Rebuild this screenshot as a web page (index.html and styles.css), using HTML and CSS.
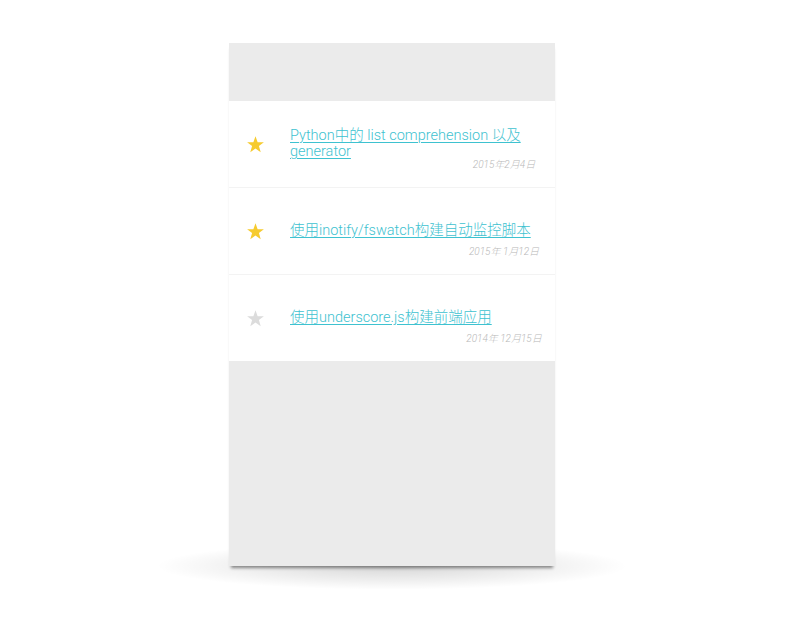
FILE: index.html
```html
<!DOCTYPE html>
<html lang="zh-CN">
<head>
<meta charset="utf-8">
<title>Posts</title>
<link rel="stylesheet" href="styles.css">
</head>
<body>
<div class="card">
  <div class="card-head"></div>
  <ul class="posts">
    <li class="post">
      <span class="star on"><svg viewBox="0 0 24 24" width="19" height="19"><polygon points="12,1.5 14.7,9 22.6,9.2 16.3,14 18.6,21.8 12,17.2 5.4,21.8 7.7,14 1.4,9.2 9.3,9"/></svg></span>
      <div class="post-body">
        <a class="title" href="#">Python中的 list comprehension 以及 generator</a>
        <div class="meta"><span class="date">2015年2月4日</span></div>
      </div>
    </li>
    <li class="post">
      <span class="star on"><svg viewBox="0 0 24 24" width="19" height="19"><polygon points="12,1.5 14.7,9 22.6,9.2 16.3,14 18.6,21.8 12,17.2 5.4,21.8 7.7,14 1.4,9.2 9.3,9"/></svg></span>
      <div class="post-body">
        <a class="title" href="#">使用inotify/fswatch构建自动监控脚本</a>
        <div class="meta"><span class="date">2015年 1月12日</span></div>
      </div>
    </li>
    <li class="post">
      <span class="star"><svg viewBox="0 0 24 24" width="19" height="19"><polygon points="12,1.5 14.7,9 22.6,9.2 16.3,14 18.6,21.8 12,17.2 5.4,21.8 7.7,14 1.4,9.2 9.3,9"/></svg></span>
      <div class="post-body">
        <a class="title" href="#">使用underscore.js构建前端应用</a>
        <div class="meta"><span class="date">2014年 12月15日</span></div>
      </div>
    </li>
  </ul>
  <div class="card-fill"></div>
</div>
</body>
</html>
```
FILE: styles.css
```css
html {
  height: 100%;
  background: #ffffff;
  overflow: hidden;
}
body {
  margin: 0;
  padding: 43px 0 0 0;
  min-height: 100%;
  box-sizing: border-box;
  font-family: Roboto, "Noto Sans CJK SC", sans-serif;
  font-weight: 300;
}
.card {
  position: relative;
  width: 326px;
  height: 523px;
  margin: 0 0 0 229px;
  background: #ebebeb;
  display: flex;
  flex-direction: column;
  box-shadow: 0 4px 3px -2px rgba(0,0,0,0.45);
}
.card::before {
  content: "";
  position: absolute;
  left: -75px;
  right: -75px;
  bottom: -24px;
  height: 48px;
  background: radial-gradient(ellipse at center, rgba(0,0,0,0.16) 0%, rgba(0,0,0,0.06) 45%, rgba(0,0,0,0) 70%);
  z-index: -1;
}
.card-head {
  height: 58px;
  flex: none;
}
.posts {
  list-style: none;
  margin: 0;
  padding: 0;
  background: #ffffff;
}
.post {
  display: grid;
  grid-template-columns: 61px 1fr;
  height: 86px;
  border-bottom: 1px solid #f3f3f3;
}
.post:last-child {
  border-bottom: none;
}
.star {
  align-self: center;
  justify-self: end;
  margin-right: 25px;
  display: flex;
  fill: #dcdcdc;
}
.star.on {
  fill: #f6cb2f;
}
.post-body {
  display: grid;
  grid-template-columns: 1fr;
  grid-template-rows: 1fr;
}
.title {
  grid-area: 1 / 1;
  align-self: center;
  justify-self: start;
  margin: 0;
  font-size: 14.5px;
  line-height: 16px;
  color: #3ec2d0;
  text-decoration: underline;
  text-underline-offset: 2px;
  text-decoration-thickness: 1px;
}
.meta {
  grid-area: 1 / 1;
  align-self: end;
  justify-self: end;
  width: 90px;
  margin: 0 6px 17px 0;
  display: flex;
  justify-content: center;
}
.date {
  font-size: 10px;
  line-height: 10px;
  font-style: italic;
  color: #b8b8b8;
}
.card-fill {
  flex: 1;
}
```
